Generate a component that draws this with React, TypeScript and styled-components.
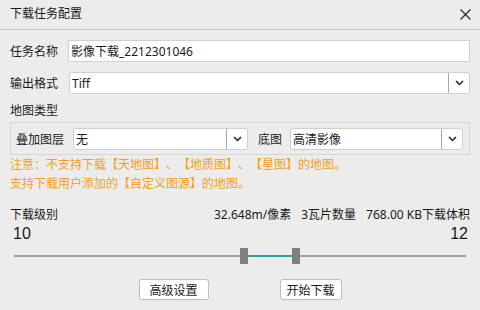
import styled, { createGlobalStyle } from "styled-components";

const GlobalStyle = createGlobalStyle`
  html, body {
    margin: 0;
    padding: 0;
    background: #ececec;
  }
  * { box-sizing: border-box; }
`;

const Dialog = styled.div`
  width: 480px;
  height: 310px;
  background: #ececec;
  font-family: "Noto Sans", "Noto Sans CJK SC", sans-serif;
  font-size: 12px;
  color: #1a1a1a;
  overflow: hidden;
  text-spacing-trim: space-all;
`;

const TitleBar = styled.div`
  height: 30px;
  display: flex;
  align-items: center;
  justify-content: space-between;
  padding: 0 8px 1px 10px;
  border-bottom: 1px solid #c6c6c6;
`;

const Title = styled.span`
  font-size: 12px;
  line-height: 16px;
`;

const CloseButton = styled.button`
  border: none;
  background: transparent;
  padding: 0;
  width: 14px;
  height: 14px;
  display: flex;
  align-items: center;
  justify-content: center;
  cursor: pointer;
`;

const Body = styled.div`
  padding: 10px 10px 0 10px;
  display: flex;
  flex-direction: column;
`;

const Row = styled.div<{ $mt?: number }>`
  display: flex;
  align-items: center;
  margin-top: ${p => p.$mt ?? 0}px;
`;

const Label = styled.span<{ $w?: number; $ml?: number }>`
  width: ${p => p.$w ?? 58}px;
  margin-left: ${p => p.$ml ?? 0}px;
  flex: none;
  white-space: nowrap;
`;

const TextInput = styled.div`
  flex: 1;
  height: 22px;
  background: #fff;
  border: 1px solid #cfcfcf;
  display: flex;
  align-items: center;
  padding-left: 2px;
  font-size: 12px;
`;

const Combo = styled.div<{ $w?: number }>`
  ${p => (p.$w ? `width: ${p.$w}px; flex: none;` : "flex: 1;")}
  height: 22px;
  background: #fff;
  border: 1px solid #cfcfcf;
  border-radius: 3px;
  display: flex;
  align-items: stretch;
`;

const ComboText = styled.span`
  flex: 1;
  display: flex;
  align-items: center;
  padding-left: 2px;
`;

const ComboArrow = styled.span`
  width: 21px;
  flex: none;
  border-left: 1px solid #a8a8a8;
  display: flex;
  align-items: center;
  justify-content: center;
`;

const SectionTitle = styled.div`
  margin-top: 9px;
  line-height: 16px;
`;

const GroupBox = styled.div`
  margin-top: 3px;
  height: 33px;
  border: 1px solid #d6d6d6;
  display: flex;
  align-items: center;
  padding: 0 6px 0 5px;
`;

const Notice = styled.div`
  color: #f5a015;
  line-height: 19px;
`;

const LevelHeader = styled.div`
  margin-top: 14px;
  display: flex;
  justify-content: space-between;
  line-height: 16px;
`;

const Stats = styled.div`
  display: flex;
  gap: 10px;
`;

const LevelNumbers = styled.div`
  display: flex;
  justify-content: space-between;
  font-family: "Liberation Sans", Arial, sans-serif;
  font-size: 16px;
  line-height: 18px;
  padding: 0 2px 0 3px;
  margin-top: 2px;
`;

const SliderTrack = styled.div`
  position: relative;
  margin: 12px 4px 0 4px;
  height: 2px;
  background: #a2a2a6;
`;

const SliderFill = styled.div`
  position: absolute;
  top: 0;
  height: 2px;
  background: #2f9c9e;
`;

const Handle = styled.div`
  position: absolute;
  top: -7px;
  width: 8px;
  height: 16px;
  margin-left: -4px;
  background: #808080;
`;

const ButtonRow = styled.div`
  margin-top: 22px;
  display: flex;
  justify-content: center;
  gap: 71px;
`;

const Button = styled.button<{ $w: number }>`
  width: ${p => p.$w}px;
  height: 21px;
  background: #fff;
  border: 1px solid #bdbdbd;
  border-radius: 3px;
  font-family: inherit;
  font-size: 12px;
  color: #1a1a1a;
  padding: 0;
`;

function Chevron() {
  return (
    <svg width="9" height="6" viewBox="0 0 9 6">
      <path d="M1 1 L4.5 4.5 L8 1" fill="none" stroke="#222" strokeWidth="1.5" />
    </svg>
  );
}

const levels = { from: 10, to: 12, min: 1.14, max: 18.55 };
const pct = (v: number) => ((v - levels.min) / (levels.max - levels.min)) * 100;

function App() {
  const a = pct(levels.from);
  const b = pct(levels.to);
  return (
    <Dialog>
      <GlobalStyle />
      <TitleBar>
        <Title>下载任务配置</Title>
        <CloseButton>
          <svg width="11" height="11" viewBox="0 0 11 11">
            <path d="M0.5 0.5 L10.5 10.5 M10.5 0.5 L0.5 10.5" stroke="#333" strokeWidth="1.4" />
          </svg>
        </CloseButton>
      </TitleBar>
      <Body>
        <Row>
          <Label>任务名称</Label>
          <TextInput>影像下载_2212301046</TextInput>
        </Row>
        <Row $mt={10}>
          <Label $w={59}>输出格式</Label>
          <Combo>
            <ComboText>Tiff</ComboText>
            <ComboArrow><Chevron /></ComboArrow>
          </Combo>
        </Row>
        <SectionTitle>地图类型</SectionTitle>
        <GroupBox>
          <Label $w={57}>叠加图层</Label>
          <Combo $w={175}>
            <ComboText>无</ComboText>
            <ComboArrow><Chevron /></ComboArrow>
          </Combo>
          <Label $w={32} $ml={10}>底图</Label>
          <Combo>
            <ComboText>高清影像</ComboText>
            <ComboArrow><Chevron /></ComboArrow>
          </Combo>
        </GroupBox>
        <Notice>注意：不支持下载【天地图】、【地质图】、【星图】的地图。</Notice>
        <Notice>支持下载用户添加的【自定义图源】的地图。</Notice>
        <LevelHeader>
          <span>下载级别</span>
          <Stats>
            <span>32.648m/像素</span>
            <span>3瓦片数量</span>
            <span>768.00 KB下载体积</span>
          </Stats>
        </LevelHeader>
        <LevelNumbers>
          <span>{levels.from}</span>
          <span>{levels.to}</span>
        </LevelNumbers>
        <SliderTrack>
          <SliderFill style={{ left: `${a}%`, width: `${b - a}%` }} />
          <Handle style={{ left: `${a}%` }} />
          <Handle style={{ left: `${b}%` }} />
        </SliderTrack>
        <ButtonRow>
          <Button $w={70}>高级设置</Button>
          <Button $w={62}>开始下载</Button>
        </ButtonRow>
      </Body>
    </Dialog>
  );
}

export default App;
